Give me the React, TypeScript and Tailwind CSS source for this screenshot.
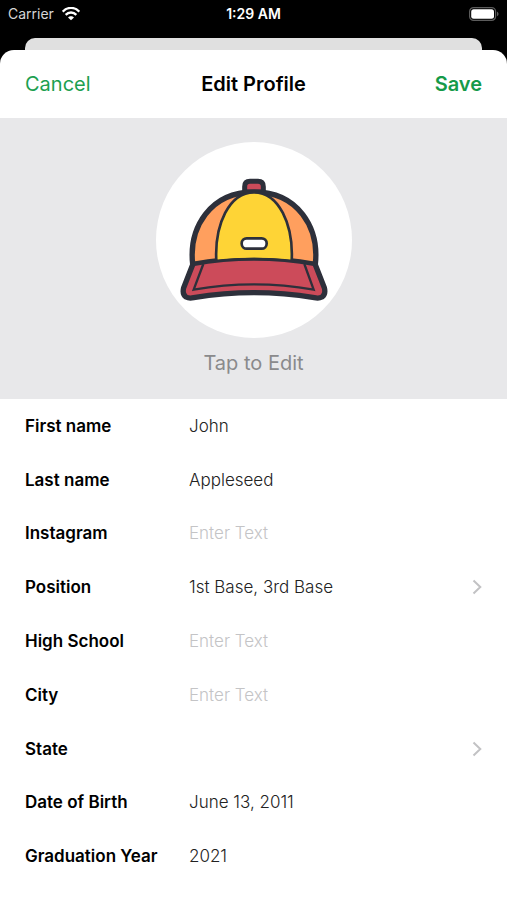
import { useState } from "react";

type Field = {
  id: string;
  label: string;
  value: string;
  kind: "text" | "picker";
};

const FIELDS: Field[] = [
  { id: "first-name", label: "First name", value: "John", kind: "text" },
  { id: "last-name", label: "Last name", value: "Appleseed", kind: "text" },
  { id: "instagram", label: "Instagram", value: "", kind: "text" },
  { id: "position", label: "Position", value: "1st Base, 3rd Base", kind: "picker" },
  { id: "high-school", label: "High School", value: "", kind: "text" },
  { id: "city", label: "City", value: "", kind: "text" },
  { id: "state", label: "State", value: "", kind: "picker" },
  { id: "birth-date", label: "Date of Birth", value: "June 13, 2011", kind: "text" },
  { id: "graduation-year", label: "Graduation Year", value: "2021", kind: "text" },
];

function WifiIcon() {
  return (
    <svg className="h-[14px] w-[18px]" viewBox="0 0 54 42" fill="none" aria-hidden="true">
      <path d="M2 14C16-1 38-1 52 14" stroke="#fff" strokeWidth="7" />
      <path d="M11 23.500C20 14 34 14 43 23.500" stroke="#fff" strokeWidth="7" />
      <path d="M18 31.500c5-5.500 13-5.500 18 0L27 40z" fill="#fff" />
    </svg>
  );
}

function BatteryIcon() {
  return (
    <svg className="h-[14px] w-[30px]" viewBox="0 0 30 14" fill="none" aria-hidden="true">
      <rect x="0.600" y="0.600" width="26" height="12.800" rx="4" stroke="#5c5c5c" strokeWidth="1.200" />
      <rect x="2.200" y="2.200" width="22.800" height="9.600" rx="2.500" fill="#fff" />
      <path d="M28 4.800c2 .7 2 3.700 0 4.400z" fill="#5c5c5c" />
    </svg>
  );
}

function ChevronIcon() {
  return (
    <svg className="h-4 w-[10px] shrink-0" viewBox="0 0 10 16" fill="none" aria-hidden="true">
      <path d="M1.500 1.500 8.300 8l-6.800 6.500" stroke="#c2c2c4" strokeWidth="2" />
    </svg>
  );
}

function CapPicture() {
  return (
    <svg className="size-full" viewBox="18 21 588 588" fill="none" aria-hidden="true">
      {/* button on the crown */}
      <path
        d="M284 172v-17q0-16 16-16h24q16 0 16 16v17z"
        fill="#cc4b5a"
        stroke="#2d303b"
        strokeWidth="15"
        strokeLinejoin="round"
      />
      {/* crown */}
      <path
        d="M128 388C116 278 180 171 312 171S508 278 496 388Q312 356 128 388Z"
        fill="#ff9f5e"
        stroke="#2d303b"
        strokeWidth="16"
        strokeLinejoin="round"
      />
      <path
        d="M199 379C193 268 238 172 312 172S431 268 425 379Q312 365 199 379Z"
        fill="#fed436"
        stroke="#2d303b"
        strokeWidth="8"
      />
      <rect x="275" y="310" width="75" height="31" rx="15" fill="#fff" stroke="#2d303b" strokeWidth="8" />
      {/* brim */}
      <path
        d="M128 389Q312 357 496 389L523 458Q528 478 516 486Q507 491 493 488Q312 458 131 488Q117 491 108 486Q96 478 101 458Z"
        fill="#cc4b5a"
      />
      <path
        d="M128 389L101 458Q96 478 108 486Q117 491 131 488Q312 458 493 488Q507 491 516 486Q528 478 523 458L496 389"
        stroke="#2d303b"
        strokeWidth="16"
        strokeLinejoin="round"
        strokeLinecap="round"
      />
      <path d="M128 389Q312 357 496 389" stroke="#2d303b" strokeWidth="9" />
      <path d="M160 387L131 464Q312 432 491 464L463 387" stroke="#2d303b" strokeWidth="7" />
    </svg>
  );
}

function ProfileRow({ field }: { field: Field }) {
  const [value, setValue] = useState(field.value);

  if (field.kind === "picker") {
    return (
      <div className="flex items-center">
        <span id={`${field.id}-label`} className="w-[164px] shrink-0 font-semibold text-black">
          {field.label}
        </span>
        <button
          type="button"
          id={field.id}
          aria-labelledby={`${field.id}-label ${field.id}`}
          className="flex min-w-0 flex-1 items-center justify-between self-stretch text-left font-light text-[#222222]"
        >
          <span>{value}</span>
          <ChevronIcon />
        </button>
      </div>
    );
  }

  return (
    <div className="flex items-center">
      <label htmlFor={field.id} className="w-[164px] shrink-0 font-semibold text-black">
        {field.label}
      </label>
      <input
        id={field.id}
        type="text"
        value={value}
        placeholder="Enter Text"
        onChange={(event) => setValue(event.target.value)}
        className="min-w-0 flex-1 self-stretch bg-transparent font-light text-[#222222] outline-none placeholder:text-[#c4c4c6]"
      />
    </div>
  );
}

export default function App() {
  return (
    <div className="flex min-h-screen flex-col bg-black font-['Inter','Liberation_Sans',sans-serif]">
      <div className="grid h-[38px] grid-cols-3 items-start px-2 pt-[3px] text-sm leading-[22px] text-white">
        <div className="flex items-center gap-2">
          <span className="text-[#d6d6d6]">Carrier</span>
          <WifiIcon />
        </div>
        <time className="text-center font-semibold">1:29 AM</time>
        <div className="flex h-[22px] items-center justify-end">
          <BatteryIcon />
        </div>
      </div>
      <div className="mx-[25px] h-3 rounded-t-[10px] bg-[#e0e0e0]" />
      <main className="flex flex-1 flex-col overflow-hidden rounded-t-[14px] bg-white">
        <header className="grid h-[68px] grid-cols-3 items-center px-[25px] text-xl">
          <button type="button" className="justify-self-start text-[#1c9f50]">
            Cancel
          </button>
          <h1 className="text-center font-semibold whitespace-nowrap text-black">Edit Profile</h1>
          <button type="button" className="justify-self-end font-semibold text-[#159a49]">
            Save
          </button>
        </header>
        <button
          type="button"
          className="flex w-full flex-col items-center gap-[11px] bg-[#e8e8ea] pt-6 pb-[22px]"
        >
          <span className="size-[196px] overflow-hidden rounded-full bg-white">
            <CapPicture />
          </span>
          <span className="text-xl text-[#8a8a8c]">Tap to Edit</span>
        </button>
        <form className="grid min-h-[484px] auto-rows-fr px-[25px] text-[17px] leading-6">
          {FIELDS.map((field) => (
            <ProfileRow key={field.id} field={field} />
          ))}
        </form>
      </main>
    </div>
  );
}
